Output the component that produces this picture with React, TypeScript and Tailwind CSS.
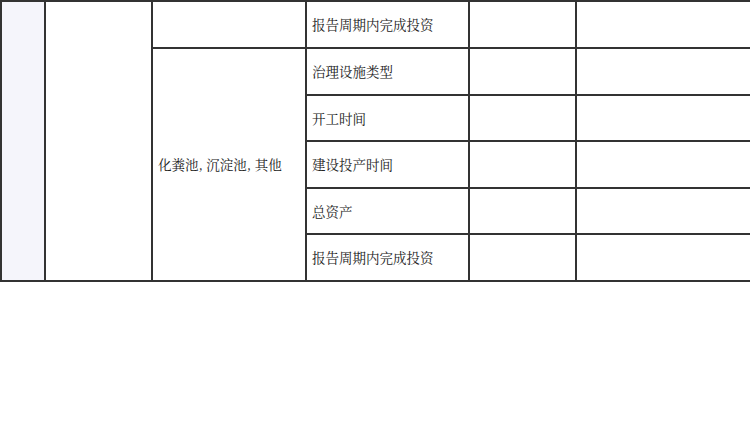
import React from 'react';

const rows = ['治理设施类型', '开工时间', '建设投产时间', '总资产', '报告周期内完成投资'];

const cell = 'border-2 border-[#333] align-middle';

const App: React.FC = () => {
  return (
    <div
      className="w-[750px] h-[442px] bg-white text-[#222] text-[13.5px]"
      style={{ fontFamily: '"Noto Serif CJK SC", "Noto Sans CJK SC", serif' }}
    >
      <table className="table-fixed border-collapse w-[750px]">
        <colgroup>
          <col className="w-[44px]" />
          <col className="w-[107px]" />
          <col className="w-[154px]" />
          <col className="w-[163px]" />
          <col className="w-[107px]" />
          <col className="w-[175px]" />
        </colgroup>
        <tbody>
          <tr className="h-[47px]">
            <td rowSpan={6} className={`${cell} bg-[#f5f5fb]`} />
            <td rowSpan={6} className={cell} />
            <td className={cell} />
            <td className={`${cell} px-[5px]`}>报告周期内完成投资</td>
            <td className={cell} />
            <td className={cell} />
          </tr>
          {rows.map((label, i) => (
            <tr key={label} className={i % 2 === 0 ? 'h-[47px]' : 'h-[46px]'}>
              {i === 0 && (
                <td rowSpan={5} className={`${cell} px-[5px]`}>
                  化粪池, 沉淀池, 其他
                </td>
              )}
              <td className={`${cell} px-[5px]`}>{label}</td>
              <td className={cell} />
              <td className={cell} />
            </tr>
          ))}
        </tbody>
      </table>
    </div>
  );
};

export default App;
